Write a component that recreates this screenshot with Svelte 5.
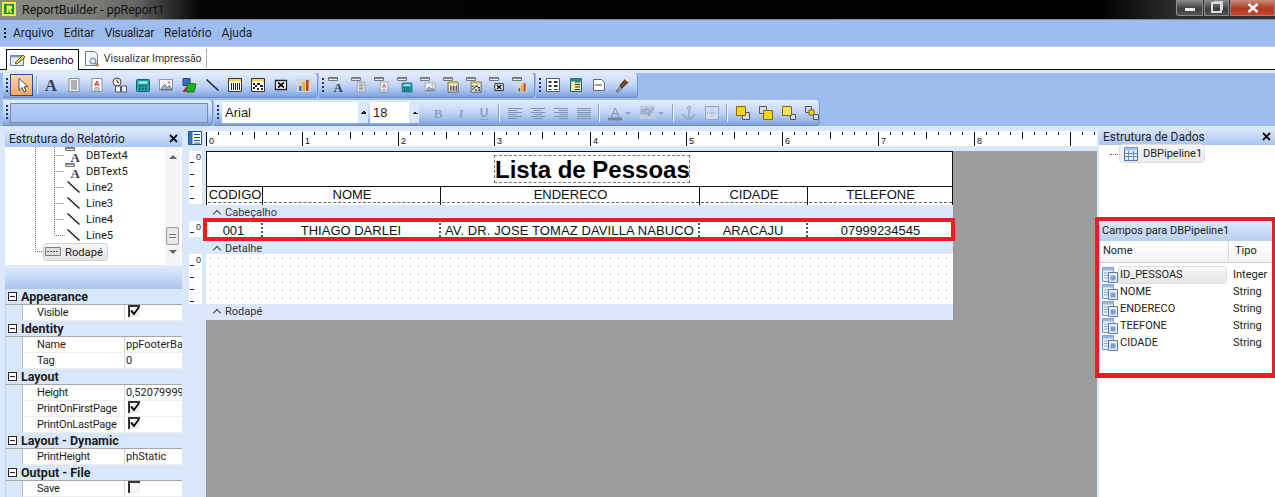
<script>
  const base = {
    arrow: '<path d="M5 1.5v12l3-3 2 4.500 2-1-2-4.300h4z" fill="#fff" stroke="#39507c"/>',
    text: '<text x="8" y="14" text-anchor="middle" font-family="Liberation Serif" font-weight="700" font-size="17" fill="#3a3f4a">A</text>',
    memo: '<path d="M3 1.500h10v13H3z" fill="#f2f2ec" stroke="#8b8f96"/><path d="M5 4h6M5 6h6M5 8h6M5 10h6M5 12h6" stroke="#6c7078"/>',
    rich: '<path d="M3 1.500h10v13H3z" fill="#fff" stroke="#8b8f96"/><path d="M5 11h6M5 13h6" stroke="#7a8ca8"/><text x="8" y="9" text-anchor="middle" font-family="Liberation Sans" font-weight="700" font-size="8" fill="#d8262c">A</text>',
    sys: '<circle cx="5" cy="5" r="4" fill="#fdf6d8" stroke="#444"/><path d="M5 2.500V5l2 1" stroke="#333" fill="none"/><path d="M3.500 9h5v6h-5zM9.500 9h5v6h-5z" fill="#eef3fb" stroke="#556"/>',
    calc: '<rect x="1.500" y="2.500" width="13" height="12" rx="1" fill="#1fa3a8" stroke="#17606e"/><path d="M3.500 4.500h9v2h-9z" fill="#bfeef0"/><path d="M4 9h1.500M7 9h1.500M10 9h1.500M4 12h1.500M7 12h1.500M10 12h1.500" stroke="#10414a" stroke-width="1.500"/>',
    image: '<path d="M1.500 2.500h13v11h-13z" fill="#f4f6fb" stroke="#8e96a4"/><path d="M2.500 12.500l4-5 3 3 2-2 2.500 4z" fill="#9fb0c8" stroke="#66758c"/><circle cx="11" cy="5.500" r="1.500" fill="#e2a26a"/>',
    shape: '<path d="M2 1.500h7v7H2z" fill="#3b69c8" stroke="#23458f"/><path d="M6 6l9 1-2 8H6z" fill="#21b021" stroke="#137313"/><path d="M1.500 15l4-6v6z" fill="#b62222"/>',
    line: '<path d="M2.500 2.500l12 11" stroke="#1f2530" stroke-width="1.600"/>',
    bar: '<path d="M1.500 1.500h13v13h-13z" fill="#fff" stroke="#333"/><path d="M2 2h12v2.500H2z" fill="#f2d34a"/><path d="M4.500 6v7M6.500 6v7M8.500 6v7M10.500 6v7M12.500 6v7" stroke="#222"/>',
    code2: '<path d="M1.500 1.500h13v13h-13z" fill="#fff" stroke="#333"/><path d="M2 2h12v2.500H2z" fill="#f2d34a"/><path d="M3 6h2v2H3zM7 6h3v2H7zM5 8h2v2H5zM10 8h3v2h-3zM3 10h2v2H3zM7 11h2v2H7zM11 11h2v2h-2z" fill="#222"/>',
    check: '<path d="M2.500 3.500h11v9h-11z" fill="#fff" stroke="#222" stroke-width="1.300"/><path d="M5 5.500l6 5M11 5.500l-6 5" stroke="#111" stroke-width="2"/>',
    chart: '<path d="M1 2h14v13H1z" fill="#d9d6d0"/><path d="M3 9h2.500v5H3z" fill="#3a6fd0"/><path d="M6.500 5H9v9H6.500z" fill="#e6b021"/><path d="M10 3h2.500v11H10z" fill="#c9392c"/>'
  };
  const tab = '<path d="M.5.500h9v3h-9z" fill="#e9e9e9" stroke="#777"/><path d="M1 1h8v1H1z" fill="#8b8b8b"/>';
  const nested = (k) => `${tab}<g transform="translate(4 4) scale(.76)">${base[k]}</g>`;
  const icons = {
    ...base,
    panel: '<path d="M1.500 1.500h13v13h-13z" fill="#fff" stroke="#4a5d80"/><path d="M3.500 4h3v2h-3zM9 4h3.500v2H9zM3.500 8h3v2h-3zM9 8h3.500v2H9zM3.500 12h3v1h-3zM9 12h3.500v1H9z" fill="#334"/>',
    table: '<path d="M2.500 1.500h11v13h-11z" fill="#f7e9a8" stroke="#12606a"/><path d="M2.500 1.500h11v3h-11z" fill="#1f8f8c"/><path d="M7 5h5M7 7.500h5M7 10h5M7 12.500h5" stroke="#333"/>',
    page: '<path d="M2.500 2.500h8l3 3v8h-11z" fill="#fff" stroke="#667"/><path d="M4 8.500l1-1 1 1 1-1 1 1 1-1 1 1 1-1" stroke="#222" fill="none"/>',
    brush: '<path d="M2 14.500l4-5 2 2-4 3.500z" fill="#9aa6b8" stroke="#667"/><path d="M6 8.500l5-6 3 3-6 5.500z" fill="#7a4a24" stroke="#4e2c10"/><path d="M10.500 2l1-1 3 3-1 1z" fill="#dfe6f0"/>',
    bold: '<text x="8" y="12.500" text-anchor="middle" font-family="Liberation Serif" font-weight="700" font-size="13" fill="#8ea2c1">B</text>',
    italic: '<text x="8" y="12.500" text-anchor="middle" font-family="Liberation Serif" font-weight="700" font-style="italic" font-size="13" fill="#8ea2c1">I</text>',
    under: '<text x="8" y="12" text-anchor="middle" font-family="Liberation Sans" font-weight="700" font-size="12" fill="#8ea2c1">U</text><path d="M3 14.500h10" stroke="#8ea2c1"/>',
    left: '<path d="M1 3.500h14M1 5.500h9M1 7.500h14M1 9.500h9M1 11.500h14M1 13.500h9" stroke="#7f93b4"/>',
    center: '<path d="M1 3.500h14M4 5.500h8M1 7.500h14M4 9.500h8M1 11.500h14M4 13.500h8" stroke="#7f93b4"/>',
    right: '<path d="M1 3.500h14M6 5.500h9M1 7.500h14M6 9.500h9M1 11.500h14M6 13.500h9" stroke="#7f93b4"/>',
    just: '<path d="M1 3.500h14M1 5.500h14M1 7.500h14M1 9.500h14M1 11.500h14M1 13.500h14" stroke="#7f93b4"/>',
    fontc: '<text x="8" y="11.500" text-anchor="middle" font-family="Liberation Sans" font-size="13" fill="#7f93b4">A</text><path d="M1 12.500h14v3H1z" fill="#76849c"/>',
    fill: '<path d="M0 1h15v13H0z" fill="#b9cbe6"/><text x="5" y="9" text-anchor="middle" font-family="Liberation Sans" font-size="9" fill="#7f93b4">ab</text><path d="M8 11l5-8" stroke="#94a8c8" stroke-width="2"/>',
    anchor: '<circle cx="8" cy="3" r="1.500" fill="none" stroke="#93a6c4"/><path d="M8 4.500V14M2.500 9c0 3 3 5 5.500 5s5.500-2 5.500-5" stroke="#93a6c4" stroke-width="1.500" fill="none"/>',
    grid: '<path d="M1.500 1.500h13v13h-13z" fill="#cfdcf2" stroke="#93a6c4"/><path d="M8 3v10M3 8h10" stroke="#93a6c4" stroke-dasharray="1 1"/>',
    front: '<path d="M7.500 7.500h7v7h-7z" fill="#d5dbe6" stroke="#556"/><path d="M1.500 1.500h9v9h-9z" fill="#f5d21e" stroke="#7a6a10"/>',
    back: '<path d="M1.500 1.500h7v7h-7z" fill="#d5dbe6" stroke="#556"/><path d="M5.500 5.500h9v9h-9z" fill="#f5d21e" stroke="#7a6a10"/>',
    fwd: '<path d="M9.500 9.500h5v5h-5z" fill="#d5dbe6" stroke="#556"/><path d="M1.500 1.500h9v9h-9z" fill="#f5e05e" stroke="#7a6a10"/>',
    bwd: '<path d="M1.500 1.500h6v6h-6z" fill="#d5dbe6" stroke="#556"/><path d="M5 5h5v5H5z" fill="#f5d21e" stroke="#7a6a10"/><path d="M9.500 9.500h5v5h-5z" fill="#d5dbe6" stroke="#556"/>',
    pipe: '<path d="M1.500 1.500h13v13h-13z" fill="#e4edfb" stroke="#4d6fa8"/><path d="M1.500 1.500h13v3h-13z" fill="#a9c2e8"/><path d="M2 7.500h12M2 10.500h12M5.500 5v9M10.500 5v9" stroke="#6c8cc0"/>',
    field: '<path d="M.5.500h11v14H.5z" fill="#eaf1fb" stroke="#6c8cc0"/><path d="M.5.500h11v3H.5z" fill="#9db8e0"/><path d="M2 6h8M2 8.500h8M2 11h8" stroke="#8aa6d0"/><path d="M6.500 5.500h9v10h-9z" fill="#e6eefa" stroke="#5a7cb2"/><path d="M8.500 8.500h5v5h-5z" fill="#7f9fd0"/>',
    footer: '<path d="M.5 3.500h15v8H.5z" fill="#dfe0dc" stroke="#7b7d7a"/><path d="M2 7.500h12" stroke="#555" stroke-dasharray="2 1"/>'
  };

  const bar1a = ['text', 'memo', 'rich', 'sys', 'calc', 'image', 'shape', 'line', 'bar', 'code2', 'check', 'chart'];
  const bar1b = ['text', 'memo', 'rich', 'calc', 'image', 'bar', 'code2', 'check', 'chart'];
  const bar1c = ['panel', 'table', 'page', 'brush'];
  const menus = ['Arquivo', 'Editar', 'Visualizar', 'Relatório', 'Ajuda'];

  const ticks = Array.from({ length: 75 }, (_, i) => i);
  const labels = [0, 1, 2, 3, 4, 5, 6, 7, 8];
  const tickHeight = (i) => (i % 8 === 0 ? 14 : i % 4 === 0 ? 7 : 3);

  const treeRows = [
    { icon: 'dbtext', label: 'DBText4' },
    { icon: 'dbtext', label: 'DBText5' },
    { icon: 'line', label: 'Line2' },
    { icon: 'line', label: 'Line3' },
    { icon: 'line', label: 'Line4' },
    { icon: 'line', label: 'Line5' }
  ];

  const props = [
    { group: 'Appearance', rows: [{ name: 'Visible', check: true }] },
    { group: 'Identity', rows: [{ name: 'Name', value: 'ppFooterBand1' }, { name: 'Tag', value: '0' }] },
    {
      group: 'Layout',
      rows: [
        { name: 'Height', value: '0,520799994' },
        { name: 'PrintOnFirstPage', check: true },
        { name: 'PrintOnLastPage', check: true }
      ]
    },
    { group: 'Layout - Dynamic', rows: [{ name: 'PrintHeight', value: 'phStatic' }] },
    { group: 'Output - File', rows: [{ name: 'Save', check: false }] }
  ];

  const headers = ['CODIGO', 'NOME', 'ENDERECO', 'CIDADE', 'TELEFONE'];
  const values = ['001', 'THIAGO DARLEI', 'AV. DR. JOSE TOMAZ DAVILLA NABUCO', 'ARACAJU', '07999234545'];
  const fields = [
    ['ID_PESSOAS', 'Integer'],
    ['NOME', 'String'],
    ['ENDERECO', 'String'],
    ['TEEFONE', 'String'],
    ['CIDADE', 'String']
  ];
</script>

{#snippet icon(name)}
  <svg class="ico" viewBox="0 0 16 16" width="16" height="16">
    {@html name === 'dbtext' ? nested('text') : icons[name]}
  </svg>
{/snippet}

{#snippet toolIcon(name)}
  <svg class="ico" viewBox="0 0 16 16" width="16" height="16">
    {@html nested(name)}
  </svg>
{/snippet}

{#snippet tool(name)}
  <span class="tool">{@render icon(name)}</span>
{/snippet}

{#snippet grip()}
  <span class="grip"></span>
{/snippet}

{#snippet closeX()}
  <svg viewBox="0 0 9 9" width="9" height="9"><path d="M1 1l7 7M8 1L1 8" stroke="#111" stroke-width="1.800" /></svg>
{/snippet}

<div class="app">
  <header class="title">
    <svg class="logo" viewBox="0 0 14 14" width="14" height="14">
      <path d="M0 0h14v14H0z" fill="#f1ee3a" />
      <path d="M2 2h10v10H2z" fill="#168a3c" />
      <path d="M4.500 3.500h4a2 2 0 0 1 0 4L10.500 11H8.500L6.500 7.800V11h-2z" fill="#f1ee3a" />
    </svg>
    <span>ReportBuilder - ppReport1</span>
    <div class="win">
      <button class="min" aria-label="Minimizar"><i></i></button>
      <button class="max" aria-label="Restaurar"><i></i></button>
      <button class="close" aria-label="Fechar">
        <svg viewBox="0 0 12 10" width="12" height="10"><path d="M1.500 1l9 8M10.500 1l-9 8" stroke="#fff" stroke-width="2.400" /></svg>
      </button>
    </div>
  </header>

  <nav class="menu">
    <span class="menugrip"></span>
    {#each menus as m}<span>{m}</span>{/each}
  </nav>

  <div class="tabs">
    <div class="tab active">
      <svg viewBox="0 0 16 14" width="16" height="14">
        <path d="M.5 2.500h13v10H.5z" fill="#e8f0fb" stroke="#5a78a8" />
        <path d="M.5 2.500h13v2H.5z" fill="#7f9fd0" />
        <path d="M5 10l8-8 2 2-8 7z" fill="#f3d25a" stroke="#6f5a18" />
      </svg>
      Desenho
    </div>
    <div class="tab">
      <svg viewBox="0 0 16 16" width="16" height="16">
        <path d="M1.500 .5h9l3 3v11h-12z" fill="#f6f8fc" stroke="#6a7a94" />
        <circle cx="9" cy="10" r="3" fill="#dbe6f5" stroke="#6a7a94" />
        <path d="M11 12l3.500 3" stroke="#a8802c" stroke-width="2" />
      </svg>
      Visualizar Impressão
    </div>
  </div>

  <div class="bars">
    <div class="row r1">
      <div class="bar b1a">
        {@render grip()}
        <span class="tool on"><svg class="ico" viewBox="0 0 16 16" width="16" height="16">{@html icons.arrow}</svg></span>
        <span class="sep"></span>
        {#each bar1a as n}{@render tool(n)}{/each}
      </div>
      <div class="bar b1b">
        {@render grip()}
        {#each bar1b as n}<span class="tool">{@render toolIcon(n)}</span>{/each}
      </div>
      <div class="bar b1c">
        {@render grip()}
        {#each bar1c as n}{@render tool(n)}{/each}
      </div>
    </div>
    <div class="row r2">
      <div class="bar b2a">
        <span class="grip"></span>
        <div class="inset"></div>
      </div>
      <div class="bar b2b">
        {@render grip()}
        <div class="combo font"><span>Arial</span><b></b></div>
        <div class="combo size"><span>18</span><b></b></div>
        <span class="gap16"></span>
        {@render tool('bold')}{@render tool('italic')}{@render tool('under')}
        <span class="sep"></span>
        {@render tool('left')}{@render tool('center')}{@render tool('right')}{@render tool('just')}
        <span class="sep"></span>
        {@render tool('fontc')}<span class="drop"></span>
        {@render tool('fill')}<span class="drop"></span>
        <span class="sep"></span>
        {@render tool('anchor')}{@render tool('grid')}
        <span class="sep"></span>
        {@render tool('front')}{@render tool('back')}{@render tool('fwd')}{@render tool('bwd')}
      </div>
    </div>
  </div>

  <main class="work">
    <aside class="left">
      <div class="phead"><span>Estrutura do Relatório</span>{@render closeX()}</div>
      <div class="tree">
        <svg class="wires" width="160" height="118">
          <path d="M30.500 0v104.500h9M49.500 0v88.500h10M49.500 24.500h10M49.500 40.500h10M49.500 56.500h10M49.500 72.500h10M49.500 8.500h10" stroke="#666" stroke-dasharray="1 1" fill="none" />
        </svg>
        <div class="nodes">
          {#each treeRows as r}
            <div class="node">{@render icon(r.icon)}<span>{r.label}</span></div>
          {/each}
          <div class="node foot">{@render icon('footer')}<span>Rodapé</span></div>
        </div>
        <div class="scroll">
          <span class="up"></span>
          <span class="thumb"></span>
          <span class="down"></span>
        </div>
      </div>
      <div class="strip"></div>
      <div class="props">
        {#each props as g}
          <div class="group"><span class="box"></span>{g.group}</div>
          {#each g.rows as r}
            <div class="prop">
              <span class="pname">{r.name}</span>
              <span class="pval">
                {#if r.value}{r.value}{:else}
                  <span class="chk">
                    {#if r.check}
                      <svg viewBox="0 0 12 12" width="12" height="12"><path d="M2 5.500l3 3.500 5-7" stroke="#111" stroke-width="2" fill="none" /></svg>
                    {/if}
                  </span>
                {/if}
              </span>
            </div>
          {/each}
        {/each}
      </div>
    </aside>

    <section class="center">
      <div class="rulerline">
        <span class="rico">
          <svg viewBox="0 0 14 14" width="14" height="14">
            <path d="M.5.500h13v13H.5z" fill="#fff" stroke="#1c4f8a" />
            <path d="M.5.500h4v13h-4z" fill="#2f6fb4" />
            <path d="M6 3.500h6M6 6.500h6M6 9.500h6M6 12h6" stroke="#1c4f8a" />
          </svg>
        </span>
        <svg class="ruler" width="891" height="15">
          {#each ticks as i}
            <rect x={i * 12} y="1" width="1" height={tickHeight(i)} fill="#111" />
          {/each}
          {#each labels as l}
            <text x={l * 96 + 3} y="13" font-family="Liberation Sans" font-size="9" fill="#111">{l}</text>
          {/each}
        </svg>
      </div>

      <div class="sheet">
        <div class="vrule">
          <div class="vr h53"><span>0</span></div>
          <div class="vr h16 mt17"><span>0</span></div>
          <div class="vr h50 mt17 long"><span>0</span></div>
        </div>
        <div class="report">
          <div class="white head">
            <div class="heading"><h1>Lista de Pessoas</h1></div>
            <div class="cols">
              {#each headers as h}<div class="cell"><span>{h}</span></div>{/each}
            </div>
          </div>
          <div class="band">Cabeçalho</div>
          <div class="white detail">
            {#each values as v}<div class="cell"><span>{v}</span></div>{/each}
          </div>
          <div class="band b2">Detalhe</div>
          <div class="dots"></div>
          <div class="band b3">Rodapé</div>
          <div class="redbox"></div>
        </div>
      </div>
    </section>

    <aside class="right">
      <div class="phead"><span>Estrutura de Dados</span>{@render closeX()}</div>
      <div class="pipes">
        <span class="wire"></span>
        <div class="pipe">{@render icon('pipe')}<span>DBPipeline1</span></div>
      </div>
      <div class="fields">
        <div class="fhead">Campos para DBPipeline1</div>
        <div class="fcols"><span>Nome</span><span>Tipo</span></div>
        {#each fields as f, i}
          <div class="frow">
            {@render icon('field')}
            <span class="fname" class:sel={i === 0}>{f[0]}</span>
            <span class="ftype">{f[1]}</span>
          </div>
        {/each}
      </div>
      <div class="rest"></div>
    </aside>
  </main>
</div>

<style>
  :global(body) {
    margin: 0;
    background: #fff;
  }
  .app {
    width: 1275px;
    height: 497px;
    overflow: hidden;
    display: flex;
    flex-direction: column;
    font: 12px Roboto, "Liberation Sans", sans-serif;
    color: #1c1c1c;
    background: #9dbdf0;
  }
  .ico {
    display: block;
    flex: none;
    overflow: visible;
  }

  .title {
    height: 20px;
    flex: none;
    display: flex;
    align-items: center;
    gap: 6px;
    padding: 0 0 1px 2px;
    box-sizing: border-box;
    border-bottom: 1px solid #8a8a8a;
    background: linear-gradient(90deg, #8c8c86 0, #7c7c78 90px, #666 135px, #2b2b2b 172px, #050505 200px, #000 1100px, #2c2c2c 1175px, #333 1275px);
    font-size: 12.400px;
    color: #111;
  }
  .win {
    margin-left: auto;
    height: 16px;
    align-self: flex-start;
    display: flex;
    gap: 1px;
  }
  .win button {
    padding: 0;
    border: 1px solid #8a8a8a;
    border-top: 0;
    display: flex;
    align-items: center;
    justify-content: center;
  }
  .min {
    width: 27px;
    background: linear-gradient(#8c8c8c, #3c3c40 60%, #555);
    border-bottom-left-radius: 3px;
  }
  .min i {
    width: 10px;
    height: 3px;
    margin-top: 3px;
    background: #eee;
  }
  .max {
    width: 25px;
    background: linear-gradient(#8c8c8c, #3c3c40 60%, #555);
  }
  .max i {
    width: 7px;
    height: 7px;
    border: 2px solid #ddd;
    box-shadow: 2px -2px 0 -1px #ccc;
  }
  .close {
    width: 45px;
    background: linear-gradient(#c98d7e, #b13a1f 55%, #c7452a);
  }

  .menu {
    height: 26px;
    flex: none;
    display: flex;
    align-items: center;
    gap: 10px;
    padding-left: 4px;
    box-sizing: border-box;
    background: #9dbdf0;
  }
  .menu span:nth-child(4) {
    letter-spacing: -.3px;
  }
  .menugrip {
    width: 2px;
    height: 11px;
    margin-right: -3px;
    background: repeating-linear-gradient(#223 0 2px, transparent 2px 4px);
  }

  .tabs {
    height: 24px;
    flex: none;
    display: flex;
    align-items: flex-end;
    padding-left: 6px;
    box-sizing: border-box;
    background: #fff;
    border-top: 1px solid #c4cfdf;
    border-bottom: 1px solid #111;
  }
  .tab {
    height: 19px;
    display: flex;
    align-items: center;
    gap: 4px;
    padding: 0 4px 0 5px;
    font-size: 10.500px;
    border-right: 1px solid #aaa;
    color: #333;
    margin-bottom: 1px;
  }
  .tab.active {
    height: 20px;
    margin-bottom: -1px;
    padding: 0 4px 0 3px;
    background: #fff;
    border: 1px solid #111;
    border-bottom: 0;
    font-size: 11.200px;
    color: #111;
  }

  .bars {
    height: 56px;
    flex: none;
    padding: 3px 0 0 3px;
    box-sizing: border-box;
    background: linear-gradient(#dce8fb 0 3px, #9dbdf0 3px);
  }
  .row {
    display: flex;
    gap: 1px;
  }
  .r1 {
    height: 25px;
    margin-bottom: 2px;
  }
  .r2 {
    height: 26px;
  }
  .bar {
    display: flex;
    align-items: center;
    box-sizing: border-box;
    border-radius: 0 4px 4px 0;
    background: linear-gradient(#e3edfc, #c5d8f8 45%, #a9c4f0 70%, #7e9fdc);
    border-right: 1px solid #7a97cc;
    border-bottom: 1px solid #6f8dc6;
  }
  .b1a {
    width: 315px;
    padding-left: 3px;
  }
  .b1b {
    width: 216px;
    padding-left: 3px;
  }
  .b1c {
    width: 102px;
    padding-left: 3px;
  }
  .b2a {
    width: 210px;
    padding-left: 3px;
  }
  .b2b {
    width: 606px;
    padding-left: 3px;
  }
  .grip {
    width: 2px;
    height: 15px;
    flex: none;
    margin-right: 1px;
    background: repeating-linear-gradient(#1f3564 0 2px, transparent 2px 4px);
  }
  .b1b .grip,
  .b1c .grip {
    margin-right: 0;
  }
  .tool {
    width: 23px;
    height: 22px;
    flex: none;
    display: flex;
    align-items: center;
    justify-content: center;
  }
  .tool.on {
    box-sizing: border-box;
    width: 23px;
    border: 1px solid #2c4d8e;
    background: linear-gradient(#fcd9a6, #f9a75c);
    margin-left: 1px;
  }
  .sep {
    width: 1px;
    height: 18px;
    flex: none;
    margin: 0 4px 0 3px;
    background: #8aa6d6;
    box-shadow: 1px 0 0 #eef4fd;
  }
  .b1a .sep {
    margin-right: 2px;
  }
  .inset {
    width: 198px;
    height: 20px;
    margin-left: 1px;
    box-sizing: border-box;
    border: 1px solid #7c8aa6;
    background: linear-gradient(#b7cff5, #a4c1f0);
  }
  .combo {
    height: 21px;
    flex: none;
    display: flex;
    align-items: center;
    justify-content: space-between;
    box-sizing: border-box;
    background: #fff;
    font: 13px "Liberation Sans", sans-serif;
    padding-left: 3px;
    margin-left: 2px;
  }
  .combo.font {
    width: 146px;
  }
  .combo.size {
    width: 49px;
  }
  .combo b {
    width: 10px;
    height: 21px;
    background:
      linear-gradient(135deg, transparent 50%, #222 50%) 3px 9px / 3px 3px no-repeat,
      linear-gradient(225deg, transparent 50%, #222 50%) 6px 9px / 3px 3px no-repeat,
      #dbe7fb;
  }
  .gap16 {
    width: 7px;
    flex: none;
  }
  .drop {
    width: 0;
    height: 0;
    flex: none;
    margin: 2px 5px 0 -1px;
    border: 3px solid transparent;
    border-top: 3px solid #8ea2c1;
    border-bottom: 0;
  }

  .work {
    flex: 1;
    min-height: 0;
    display: flex;
    background: #dbe8fb;
  }
  .left {
    width: 177px;
    margin: 4px 0 0 5px;
    flex: none;
    display: flex;
    flex-direction: column;
  }
  .phead {
    height: 17px;
    flex: none;
    display: flex;
    align-items: center;
    justify-content: space-between;
    padding: 0 4px;
    background: linear-gradient(#dde9fb, #aac6f1);
    color: #222;
  }
  .tree {
    height: 118px;
    flex: none;
    position: relative;
    display: flex;
    background: #fff;
    overflow: hidden;
    font-size: 11.200px;
  }
  .wires {
    position: absolute;
    left: 0;
    top: 0;
  }
  .nodes {
    flex: 1;
    position: relative;
    padding: 0 0 0 60px;
  }
  .node {
    height: 16px;
    display: flex;
    align-items: center;
    gap: 5px;
  }
  .node.foot {
    margin-left: -21px;
    width: 63px;
    padding-left: 1px;
    gap: 4px;
    box-sizing: border-box;
    margin-top: 1px;
    border-radius: 3px;
    background: linear-gradient(#f7f7f7, #e4e4e4);
    box-shadow: 0 0 0 1px #d2d2d2;
  }
  .scroll {
    width: 15px;
    margin-right: 2px;
    flex: none;
    display: flex;
    flex-direction: column;
    align-items: center;
    background: #f4f4f4;
  }
  .up,
  .down {
    width: 0;
    height: 0;
    border: 4px solid transparent;
  }
  .up {
    margin-top: 4px;
    border-bottom-color: #666;
  }
  .down {
    margin-top: 5px;
    border-top-color: #666;
  }
  .thumb {
    width: 13px;
    height: 18px;
    margin-top: 68px;
    box-sizing: border-box;
    border: 1px solid #999;
    border-radius: 2px;
    background: repeating-linear-gradient(#eee 0 2px, #777 2px 3px) center / 7px 8px no-repeat, #e8e8e8;
  }
  .strip {
    height: 24px;
    flex: none;
    background: linear-gradient(#e3edfc, #a9c5f1);
  }
  .props {
    flex: 1;
    background: #d9e7fb;
    border-left: 1px solid #bcd0ef;
  }
  .group {
    height: 16px;
    display: flex;
    align-items: center;
    gap: 4px;
    padding-left: 2px;
    font-weight: 700;
    font-size: 12.500px;
    box-sizing: border-box;
    border-bottom: 1px solid #a7a7a7;
  }
  .box {
    width: 7px;
    height: 7px;
    flex: none;
    border: 1px solid #222;
    background: linear-gradient(#222, #222) center / 5px 1px no-repeat, #fff;
  }
  .prop {
    height: 16px;
    margin-left: 16px;
    display: grid;
    grid-template-columns: 102px 1fr;
    background: #fff;
    box-sizing: border-box;
    border-left: 1px solid #bbb;
    border-bottom: 1px solid #eee;
    overflow: hidden;
    font-size: 11px;
    line-height: 15px;
  }
  .pname {
    padding-left: 14px;
    letter-spacing: -.2px;
    border-right: 1px solid #d8d8d8;
    white-space: nowrap;
  }
  .pval {
    padding-left: 1px;
    white-space: nowrap;
    overflow: hidden;
  }
  .chk {
    display: block;
    width: 12px;
    height: 12px;
    margin-left: 2px;
    box-sizing: border-box;
    border-top: 2px solid #333;
    border-left: 2px solid #333;
    background: #f3f3f0;
  }
  .chk svg {
    display: block;
    margin: -2px 0 0 -1px;
  }

  .center {
    width: 911px;
    margin-left: 4px;
    flex: none;
    display: flex;
    flex-direction: column;
    min-height: 0;
    background: #dbe8fb;
    padding-top: 5px;
    box-sizing: border-box;
  }
  .rulerline {
    height: 15px;
    flex: none;
    display: flex;
  }
  .rico {
    width: 20px;
    padding-left: 2px;
    box-sizing: border-box;
  }
  .ruler {
    display: block;
    background: #fff;
  }
  .sheet {
    flex: 1;
    min-height: 0;
    margin-top: 5px;
    display: flex;
  }
  .vrule {
    width: 20px;
    flex: none;
    padding-left: 3px;
    box-sizing: border-box;
  }
  .vr {
    width: 13px;
    background: #fff repeating-linear-gradient(transparent 0 11px, #222 11px 12px) 1px 0 / 4px 100% no-repeat;
    position: relative;
  }
  .vr span {
    position: absolute;
    right: 1px;
    top: 1px;
    font: 9px "Liberation Sans", sans-serif;
  }
  .h53 {
    height: 53px;
  }
  .h16 {
    height: 16px;
  }
  .h50 {
    height: 50px;
  }
  .mt17 {
    margin-top: 17px;
  }
  .report {
    flex: 1;
    position: relative;
    background: #9d9d9d;
    display: flex;
    flex-direction: column;
    align-items: flex-start;
    font-family: "Liberation Sans", sans-serif;
  }
  .white {
    width: 747px;
    background: #fff;
  }
  .head {
    box-sizing: border-box;
    height: 54px;
    border: 1px solid #111;
    border-width: 1px 1px 0;
  }
  .heading {
    height: 35px;
    box-sizing: border-box;
    padding-top: 3px;
    display: flex;
    justify-content: center;
    border-bottom: 1px solid #111;
  }
  .heading h1 {
    margin: 0 0 0 25px;
    width: 196px;
    height: 28px;
    flex: none;
    box-sizing: border-box;
    border: 1px dashed #777;
    text-align: center;
    font-size: 24px;
    line-height: 27px;
    font-weight: 700;
    white-space: nowrap;
    color: #000;
  }
  .cols,
  .detail {
    display: grid;
    grid-template-columns: 55px 178px 259px 108px 1fr;
  }
  .cols {
    height: 18px;
  }
  .cols .cell {
    height: 18px;
    border-left: 1px solid #111;
  }
  .cols .cell:first-child {
    border-left: 0;
  }
  .cols .cell span {
    display: block;
    height: 16px;
    margin-left: 1px;
    box-sizing: border-box;
    border-bottom: 1px dashed #666;
  }
  .cell {
    min-width: 0;
    text-align: center;
    font-size: 13px;
    line-height: 16px;
    white-space: nowrap;
    color: #111;
  }
  .band {
    width: 747px;
    height: 14px;
    flex: none;
    box-sizing: border-box;
    padding-left: 19px;
    background: #dbe8fb;
    font: 11px/16px Roboto, sans-serif;
    color: #333;
    position: relative;
  }
  .band::before {
    content: "";
    position: absolute;
    left: 8px;
    top: 6px;
    width: 5px;
    height: 5px;
    border: solid #444;
    border-width: 1px 0 0 1px;
    transform: rotate(45deg);
  }
  .detail {
    height: 22px;
    flex: none;
    box-sizing: border-box;
    padding-top: 4px;
  }
  .detail .cell {
    height: 14px;
    line-height: 15px;
    border-left: 2px dotted #555;
  }
  .detail .cell:first-child {
    border-left: 0;
  }
  .detail .cell:nth-child(3) {
    letter-spacing: .1px;
  }
  .b2 {
    height: 13px;
  }
  .dots {
    width: 747px;
    height: 50px;
    flex: none;
    background: #fff radial-gradient(circle at 4.500px 4.500px, #888 .6px, transparent .8px) 0 0 / 8px 8px;
  }
  .b3 {
    height: 16px;
  }
  .redbox {
    position: absolute;
    left: -3px;
    top: 67px;
    width: 752px;
    height: 23px;
    box-sizing: border-box;
    border: 4px solid #ed1c24;
    pointer-events: none;
  }

  .right {
    flex: 1;
    margin: 2px 0 0 2px;
    min-width: 0;
    display: flex;
    flex-direction: column;
    background: #fff;
    position: relative;
  }
  .pipes {
    height: 72px;
    flex: none;
    display: flex;
    align-items: flex-start;
    padding: 0 0 0 11px;
    box-sizing: border-box;
    font-size: 11px;
  }
  .wire {
    width: 10px;
    margin-top: 9px;
    border-top: 1px dotted #666;
  }
  .pipe {
    height: 17px;
    display: flex;
    align-items: center;
    gap: 4px;
    padding: 0 2px 0 3px;
    border-radius: 3px;
    background: linear-gradient(#f7f7f7, #eaeaea);
    box-shadow: 0 0 0 1px #dedede;
  }
  .fields {
    height: 161px;
    flex: none;
    margin-left: -4px;
    box-sizing: border-box;
    border: 4px solid #ed1c24;
    border-width: 4px 3px 5px 4px;
    font-size: 11px;
  }
  .fhead {
    height: 20px;
    line-height: 20px;
    padding-left: 3px;
    background: linear-gradient(#dde9fb, #b8cff3);
  }
  .fcols {
    height: 22px;
    display: grid;
    grid-template-columns: 129px 1fr;
    line-height: 20px;
    background: linear-gradient(#fff, #f3f3f3);
    border-bottom: 1px solid #ccc;
    box-sizing: border-box;
  }
  .fcols span {
    padding-left: 4px;
  }
  .fcols span + span {
    border-left: 1px solid #ddd;
    padding-left: 6px;
  }
  .frow {
    height: 17px;
    display: flex;
    align-items: center;
    padding-left: 3px;
    position: relative;
  }
  .fname {
    width: 107px;
    height: 16px;
    line-height: 16px;
    flex: none;
    margin-left: 1px;
    padding-left: 1px;
    box-sizing: border-box;
  }
  .fname.sel {
    border-radius: 3px;
    background: linear-gradient(#f7f7f7, #e6e6e6);
    box-shadow: 0 0 0 1px #dcdcdc;
  }
  .ftype {
    margin-left: 7px;
  }
  .fcols + .frow {
    margin-top: 3px;
  }
  .rest {
    flex: 1;
  }
</style>
